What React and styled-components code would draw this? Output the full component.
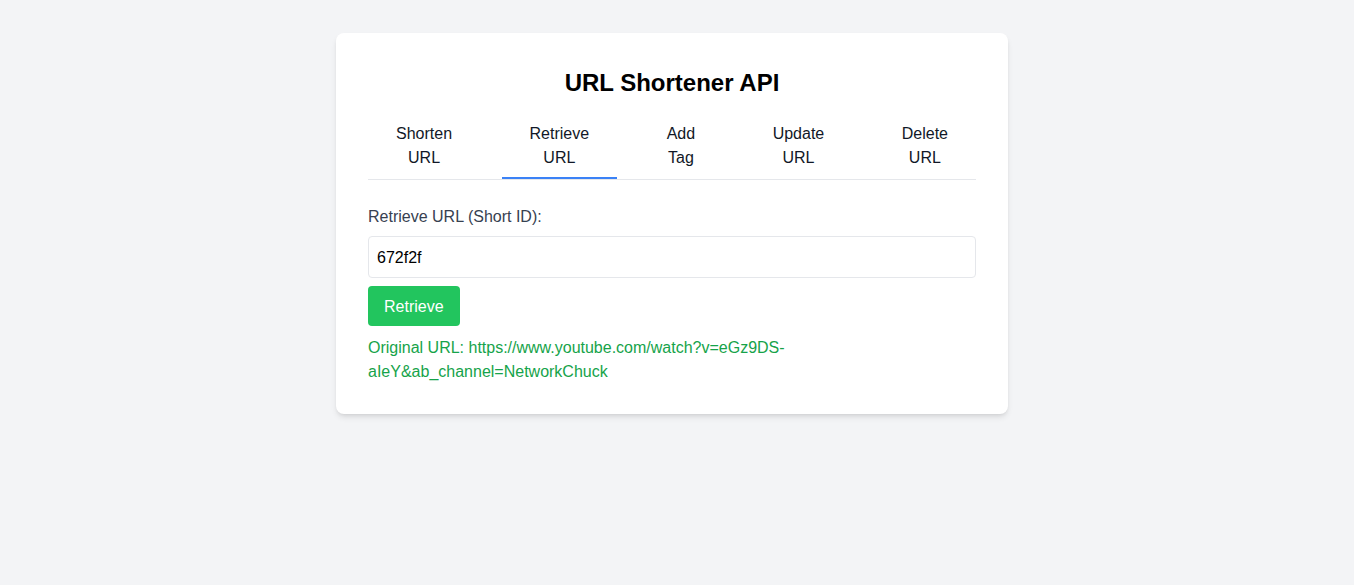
import React, { useState } from "react";
import styled, { createGlobalStyle } from "styled-components";

const Global = createGlobalStyle`
  html, body { margin: 0; padding: 0; background: #f3f4f6; }
  body { font-family: "Segoe UI", "Liberation Sans", Arial, sans-serif; color: #111827; }
  * { box-sizing: border-box; }
`;

const Page = styled.div`
  min-height: 585px;
  background: #f3f4f6;
  display: flex;
  justify-content: center;
  align-items: flex-start;
  padding: 33px 10px 0 0;
`;

const Card = styled.div`
  width: 672px;
  background: #ffffff;
  border-radius: 8px;
  padding: 34px 32px 30px;
  box-shadow: 0 4px 6px -1px rgba(0, 0, 0, 0.1), 0 2px 4px -2px rgba(0, 0, 0, 0.1);
`;

const Title = styled.h1`
  margin: 0 0 14px;
  font-size: 24px;
  line-height: 32px;
  font-weight: 700;
  text-align: center;
  color: #000;
`;

const TabBar = styled.div`
  display: flex;
  justify-content: space-between;
  border-bottom: 1px solid #e5e7eb;
`;

const Tab = styled.button`
  width: min-content;
  padding: 9px 28px 7px;
  background: none;
  border: none;
  border-bottom: 2px solid ${(p) => (p.$active ? "#3b82f6" : "transparent")};
  font-family: inherit;
  font-size: 16px;
  line-height: 24px;
  color: #111827;
  text-align: center;
  cursor: pointer;
`;

const Form = styled.div`
  margin-top: 25px;
  display: flex;
  flex-direction: column;
`;

const Label = styled.label`
  font-size: 16px;
  line-height: 24px;
  color: #374151;
  margin-bottom: 7px;
`;

const Input = styled.input`
  width: 100%;
  padding: 9px 8px 7px;
  font-family: inherit;
  font-size: 16px;
  line-height: 24px;
  color: #000;
  border: 1px solid #e5e7eb;
  border-radius: 4px;
  outline: none;
`;

const Button = styled.button`
  align-self: flex-start;
  margin-top: 8px;
  padding: 9px 16px 7px;
  background: #22c55e;
  color: #fff;
  border: none;
  border-radius: 4px;
  font-family: inherit;
  font-size: 16px;
  line-height: 24px;
  cursor: pointer;
`;

const Result = styled.p`
  margin: 10px 0 0;
  font-size: 16px;
  line-height: 24px;
  color: #16a34a;
`;

const tabs = [
  "Shorten URL",
  "Retrieve URL",
  "Add Tag",
  "Update URL",
  "Delete URL",
];

export default function App() {
  const [active, setActive] = useState(1);
  const [value, setValue] = useState("672f2f");
  return (
    <>
      <Global />
      <Page>
        <Card>
          <Title>URL Shortener API</Title>
          <TabBar>
            {tabs.map((t, i) => (
              <Tab key={t} $active={i === active} onClick={() => setActive(i)}>
                {t}
              </Tab>
            ))}
          </TabBar>
          <Form>
            <Label>Retrieve URL (Short ID):</Label>
            <Input value={value} onChange={(e) => setValue(e.target.value)} />
            <Button>Retrieve</Button>
            <Result>
              Original URL: https://www.youtube.com/watch?v=eGz9DS-aIeY&amp;ab_channel=NetworkChuck
            </Result>
          </Form>
        </Card>
      </Page>
    </>
  );
}
